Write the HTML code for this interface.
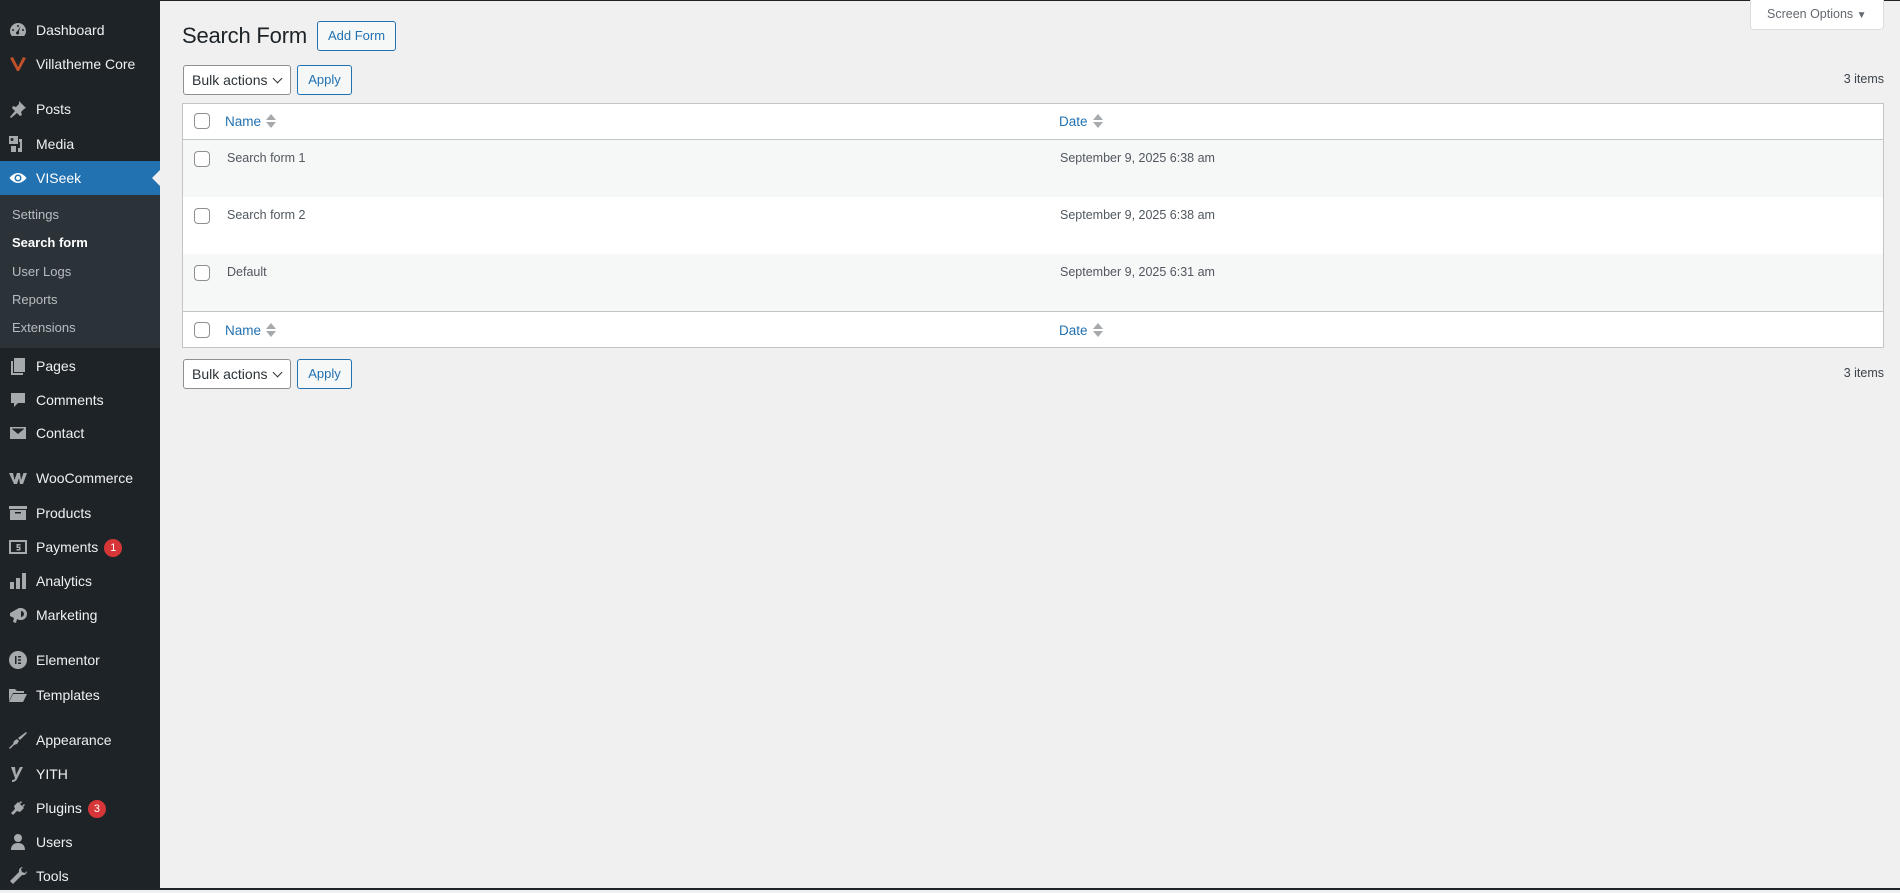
<!DOCTYPE html>
<html><head><meta charset="utf-8"><style>
*{box-sizing:border-box;margin:0;padding:0}
body{width:1900px;height:890px;overflow:hidden;background:#f0f0f1;font-family:"Liberation Sans",sans-serif;color:#3c434a;position:relative}
#top{position:absolute;left:0;top:0;width:1900px;height:1px;background:#1d2327}
#bot{position:absolute;left:0;top:888px;width:1900px;height:2px;background:#1d2327}
#side{position:absolute;left:0;top:0;width:160px;height:888px;background:#1d2327}
.mi{position:absolute;left:0;width:160px;height:34px;color:#f0f0f1;font-size:14px;line-height:34px;padding-left:36px}
.ic{position:absolute;left:8px;top:7px;width:20px;height:20px;fill:#a7aaad}
#sub{position:absolute;left:0;top:195px;width:160px;height:153px;background:#2c3338}
.si{position:absolute;left:12px;font-size:13px;color:rgba(240,246,252,.7);line-height:20px}
.badge{display:inline-block;background:#d63638;color:#fff;border-radius:9px;width:18px;height:18px;font-size:11px;line-height:18px;text-align:center;margin-left:6px;vertical-align:1px}
.btn{position:absolute;border:1px solid #2271b1;border-radius:3px;background:#f6f7f7;color:#2271b1;font-size:13px;text-align:center}
.sel{position:absolute;border:1px solid #8c8f94;border-radius:3px;background:#fff;color:#2c3338;font-size:14px;padding-left:8px}
.cb{position:absolute;left:194px;width:16px;height:16px;border:1px solid #8c8f94;border-radius:4px;background:#fff}
.lk{position:absolute;color:#2271b1;font-size:13.5px}
.tx{position:absolute;font-size:12.5px;color:#50575e}
.arr{position:relative;display:inline-block;width:10px;height:16px;margin-left:5px;vertical-align:-3px}
.arr:before{content:"";position:absolute;left:0;top:1px;border:5px solid transparent;border-top:0;border-bottom:6px solid #a7aaad}
.arr:after{content:"";position:absolute;left:0;top:9px;border:5px solid transparent;border-bottom:0;border-top:6px solid #a7aaad}
.chev{position:absolute;right:9px;top:9px;width:7px;height:7px;border-right:1.5px solid #2c3338;border-bottom:1.5px solid #2c3338;transform:rotate(45deg)}
</style></head><body>
<div id="top"></div>
<div id="side">
<div class="mi" style="top:13px"><svg class="ic" viewBox="0 0 20 20"><path d="M10 3a8 8 0 0 0-8 8c0 2 .7 3.6 1.8 5h12.4A8 8 0 0 0 10 3zm0 2a1 1 0 1 1 0 2 1 1 0 0 1 0-2zM5 9a1 1 0 1 1 0 2 1 1 0 0 1 0-2zm10 0a1 1 0 1 1 0 2 1 1 0 0 1 0-2zm-2.5-2.5l-1.7 5.4a1.6 1.6 0 1 1-1.6-.5z"/></svg>Dashboard</div>
<div class="mi" style="top:47px"><svg class="ic" viewBox="0 0 20 20" style="fill:#c0502a"><path d="M2 4l3-1 5 10 5-10 3 1-7 13h-2z"/></svg>Villatheme Core</div>
<div class="mi" style="top:92px"><svg class="ic" viewBox="0 0 20 20"><path d="M11 2l7 7-2 1-3 3 1 3-2 1-3-3-6 5-1-1 5-6-3-3 1-2 3 1 3-3z"/></svg>Posts</div>
<div class="mi" style="top:127px"><svg class="ic" viewBox="0 0 20 20"><path d="M1 2h9v8H1zm3 2a1.5 1.5 0 1 0 0 3 1.5 1.5 0 0 0 0-3zM11 5h3v13h-4v-4h2V8h-1zM3 12h5v6H3z"/></svg>Media</div>
<div class="mi" style="top:161px;background:#2271b1;color:#fff"><svg class="ic" viewBox="0 0 20 20" style="fill:#fff"><path d="M10 5C5 5 1.5 10 1.5 10S5 15 10 15s8.5-5 8.5-5S15 5 10 5zm0 8.5a3.5 3.5 0 1 1 0-7 3.5 3.5 0 0 1 0 7zM10 8a2 2 0 1 0 0 4 2 2 0 0 0 0-4z"/></svg>VISeek
<div style="position:absolute;right:0;top:9px;width:0;height:0;border:8px solid transparent;border-right-color:#f0f0f1"></div></div>
<div id="sub"></div>
<div class="si" style="top:205px">Settings</div>
<div class="si" style="top:233px;color:#fff;font-weight:bold">Search form</div>
<div class="si" style="top:262px">User Logs</div>
<div class="si" style="top:290px">Reports</div>
<div class="si" style="top:318px">Extensions</div>
<div class="mi" style="top:349px"><svg class="ic" viewBox="0 0 20 20"><path d="M6 2h11v14H6zM3 5h2v12h10v2H3z"/></svg>Pages</div>
<div class="mi" style="top:383px"><svg class="ic" viewBox="0 0 20 20"><path d="M3 3h14v10h-7l-4 4v-4H3z"/></svg>Comments</div>
<div class="mi" style="top:416px"><svg class="ic" viewBox="0 0 20 20"><path d="M2 4h16v12H2zm2 2l6 5 6-5v-.5H4z"/></svg>Contact</div>
<div class="mi" style="top:461px"><svg class="ic" viewBox="0 0 20 20"><path d="M1 5h4l1.5 7 2.5-7h3l1 7 2.5-7H19l-4 11h-3l-1-6-2 6H6z"/></svg>WooCommerce</div>
<div class="mi" style="top:496px"><svg class="ic" viewBox="0 0 20 20"><path d="M1 3h18v3H1zm1 4h16v10H2zm5 2v1.5h6V9z"/></svg>Products</div>
<div class="mi" style="top:530px"><svg class="ic" viewBox="0 0 20 20"><path d="M1 3h18v14H1zm2 2v10h14V5zm5.5 2h4v1.5H10v1h2.5v4h-4V12H11v-1H8.5z"/></svg>Payments<span class="badge">1</span></div>
<div class="mi" style="top:564px"><svg class="ic" viewBox="0 0 20 20"><path d="M2 11h4v7H2zm6-4h4v11H8zm6-5h4v16h-4z"/></svg>Analytics</div>
<div class="mi" style="top:598px"><svg class="ic" viewBox="0 0 20 20"><path d="M2 8l9-5h2a5 5 0 0 1 0 12h-2l-2-1-1 4-3-1 1-4-4-2zm11-2v6a3 3 0 0 0 0-6z"/></svg>Marketing</div>
<div class="mi" style="top:643px"><svg class="ic" viewBox="0 0 20 20"><path d="M10 1a9 9 0 1 0 0 18 9 9 0 0 0 0-18zM7 6h1.5v8H7zm3 0h3v1.5h-3zm0 3.3h3v1.5h-3zm0 3.2h3V14h-3z"/></svg>Elementor</div>
<div class="mi" style="top:678px"><svg class="ic" viewBox="0 0 20 20"><path d="M1 4h6l2 2h7v2H5l-4 8zm4 5h14l-4 8H1z"/></svg>Templates</div>
<div class="mi" style="top:723px"><svg class="ic" viewBox="0 0 20 20"><path d="M18 2l1 1-7 7-2-2zM9 9l2 2-2 3-3 1-4 4-1-1 4-4 1-3z"/></svg>Appearance</div>
<div class="mi" style="top:757px"><svg class="ic" viewBox="0 0 20 20"><path d="M3 3h4l1 8 4-8h3l-6 12c-1 2-3 3-5 3v-2c2 0 3-1 3-2z"/></svg>YITH</div>
<div class="mi" style="top:791px"><svg class="ic" viewBox="0 0 20 20"><path d="M13 3l1 1-2 2 2 2 2-2 1 1-2 2 1 1-4 4-3-1-4 4-2-2 4-4-1-3 4-4 1 1z"/></svg>Plugins<span class="badge">3</span></div>
<div class="mi" style="top:825px"><svg class="ic" viewBox="0 0 20 20"><path d="M10 2a4 4 0 1 1 0 8 4 4 0 0 1 0-8zM3 18c0-5 3-7 7-7s7 2 7 7z"/></svg>Users</div>
<div class="mi" style="top:859px"><svg class="ic" viewBox="0 0 20 20"><path d="M15 1a4 4 0 0 0-4 5L2 15l3 3 9-9a4 4 0 0 0 5-4l-2 2-3-1-1-3z"/></svg>Tools</div>
</div>

<div style="position:absolute;left:1750px;top:0;width:134px;height:30px;background:#fff;border:1px solid #dcdcde;border-top:none;border-radius:0 0 4px 4px;font-size:12.5px;color:#646970;line-height:29px;padding-left:16px">Screen Options <span style="font-size:10px">▼</span></div>

<div style="position:absolute;left:182px;top:20px;font-size:22px;color:#1d2327;line-height:32px;letter-spacing:-0.2px">Search Form</div>
<div class="btn" style="left:317px;top:21px;width:79px;height:30px;line-height:28px">Add Form</div>

<div class="sel" style="left:183px;top:65px;width:108px;height:30px;line-height:28px">Bulk actions<span class="chev"></span></div>
<div class="btn" style="left:297px;top:65px;width:55px;height:30px;line-height:28px">Apply</div>
<div class="tx" style="right:16px;top:72px;color:#3c434a">3 items</div>

<div style="position:absolute;left:182px;top:103px;width:1702px;height:245px;border:1px solid #c3c4c7;background:#fff">
<div style="position:absolute;left:0;top:35px;width:1700px;height:1px;background:#c3c4c7"></div>
<div style="position:absolute;left:0;top:36px;width:1700px;height:57px;background:#f6f7f7"></div>
<div style="position:absolute;left:0;top:150px;width:1700px;height:57px;background:#f6f7f7"></div>
<div style="position:absolute;left:0;top:207px;width:1700px;height:1px;background:#c3c4c7"></div>
</div>
<div class="cb" style="top:113px"></div>
<div class="lk" style="left:225px;top:113px">Name<span class="arr"></span></div>
<div class="lk" style="left:1059px;top:113px">Date<span class="arr"></span></div>
<div class="cb" style="top:151px"></div><div class="tx" style="left:227px;top:151px">Search form 1</div><div class="tx" style="left:1060px;top:151px">September 9, 2025 6:38 am</div>
<div class="cb" style="top:208px"></div><div class="tx" style="left:227px;top:208px">Search form 2</div><div class="tx" style="left:1060px;top:208px">September 9, 2025 6:38 am</div>
<div class="cb" style="top:265px"></div><div class="tx" style="left:227px;top:265px">Default</div><div class="tx" style="left:1060px;top:265px">September 9, 2025 6:31 am</div>
<div class="cb" style="top:322px"></div>
<div class="lk" style="left:225px;top:322px">Name<span class="arr"></span></div>
<div class="lk" style="left:1059px;top:322px">Date<span class="arr"></span></div>

<div class="sel" style="left:183px;top:359px;width:108px;height:30px;line-height:28px">Bulk actions<span class="chev"></span></div>
<div class="btn" style="left:297px;top:359px;width:55px;height:30px;line-height:28px">Apply</div>
<div class="tx" style="right:16px;top:366px;color:#3c434a">3 items</div>
<div id="bot"></div>
</body></html>
